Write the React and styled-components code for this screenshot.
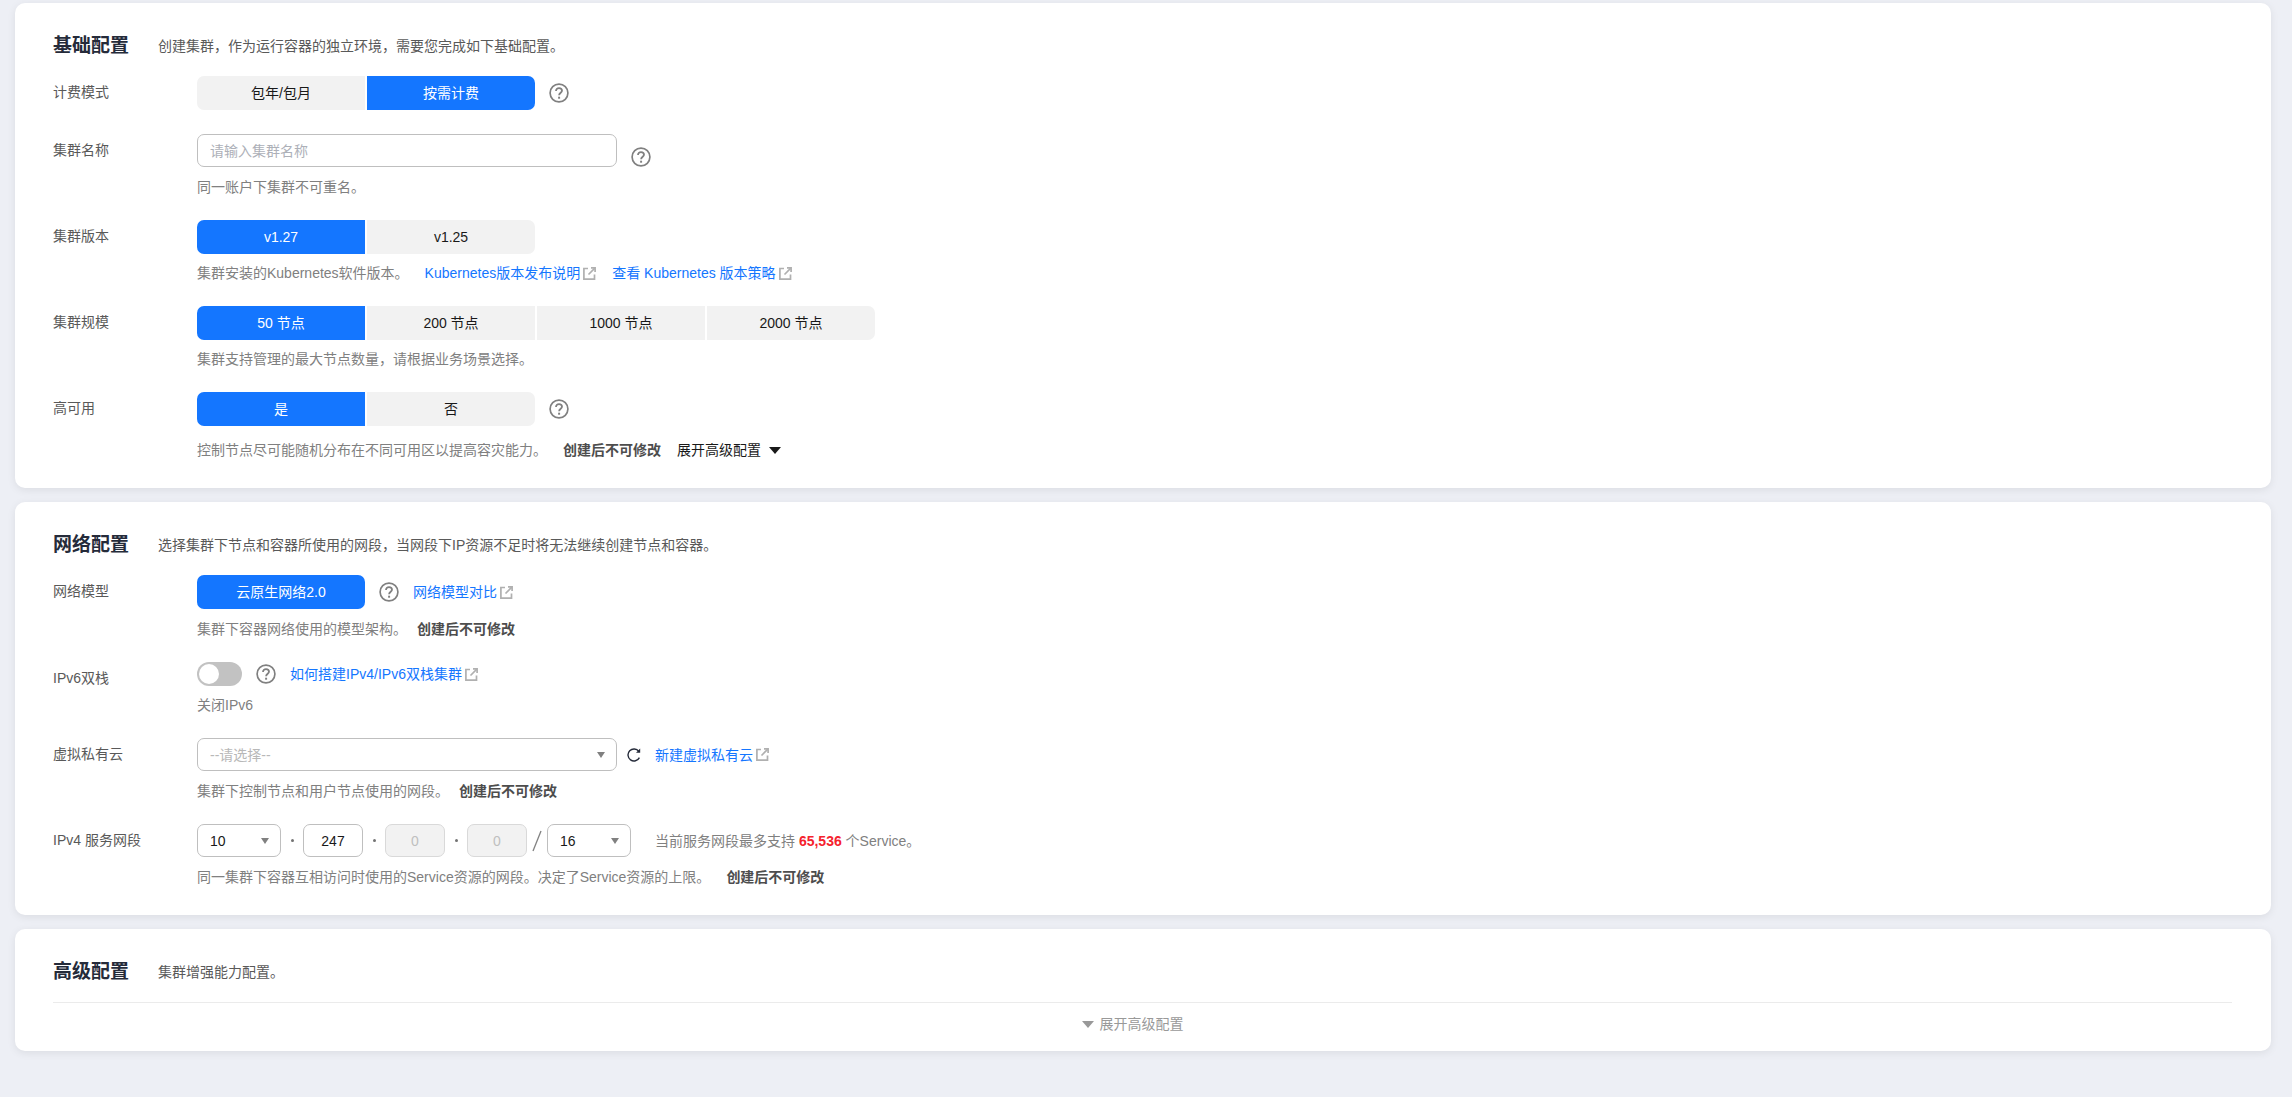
import React, { useState } from 'react'
import styled, { createGlobalStyle } from 'styled-components'

function ButtonGroup({ options, value, onChange, labelledBy }) {
    return (
        <Segments role="group" aria-labelledby={labelledBy}>
            {options.map((option) => (
                <Segment
                    key={option}
                    type="button"
                    $active={option === value}
                    aria-pressed={option === value}
                    onClick={() => onChange(option)}
                >
                    {option}
                </Segment>
            ))}
        </Segments>
    )
}

function HelpIcon() {
    return (
        <IconButton type="button" aria-label="帮助">
            <svg width="20" height="20" viewBox="0 0 20 20" fill="none" stroke="#808080">
                <circle cx="10" cy="10" r="8.9" strokeWidth="1.7" />
                <path d="M7 8C7 6.1 8.300 5.100 10 5.100s3 1 3 2.600c0 2-2.900 2.100-2.900 4.600" strokeWidth="1.8" />
                <path d="M9.100 13.700h2v2h-2z" fill="#808080" stroke="none" />
            </svg>
        </IconButton>
    )
}

function ExternalLink({ children }) {
    return (
        <Link href="#">
            {children}
            <svg width="13" height="13" viewBox="0 0 13 13" fill="none" stroke="#b0b0b0" strokeWidth="1.7">
                <path d="M5 1.5H.9v10.600h10.600V7.500" />
                <path d="M5.500 7.500L11.800 1.200" />
                <path d="M8 .9h4.100V5" />
            </svg>
        </Link>
    )
}

function Triangle({ size = 8, height = 6 }) {
    return (
        <svg width={size} height={height} viewBox="0 0 8 6" preserveAspectRatio="none">
            <path d="M0 0h8L4 6z" fill="currentColor" />
        </svg>
    )
}

function Dropdown({ id, label, placeholder, options, wide }) {
    const [value, setValue] = useState(placeholder ? '' : options[0])

    return (
        <SelectBox $wide={wide}>
            <SelectInput
                id={id}
                aria-label={label}
                $empty={value === ''}
                value={value}
                onChange={(e) => setValue(e.target.value)}
            >
                {placeholder && <option value="">{placeholder}</option>}
                {options.map((option) => <option key={option}>{option}</option>)}
            </SelectInput>
            <SelectArrow><Triangle /></SelectArrow>
        </SelectBox>
    )
}

function BasicConfig() {
    const [billing, setBilling] = useState('按需计费')
    const [version, setVersion] = useState('v1.27')
    const [scale, setScale] = useState('50 节点')
    const [ha, setHa] = useState('是')

    return (
        <Card>
            <CardHeader>
                <h2>基础配置</h2>
                <p>创建集群，作为运行容器的独立环境，需要您完成如下基础配置。</p>
            </CardHeader>

            <FormRow $space={24}>
                <Label as="span" id="billing">计费模式</Label>
                <Controls>
                    <ButtonGroup labelledBy="billing" options={['包年/包月', '按需计费']} value={billing} onChange={setBilling} />
                    <HelpIcon />
                </Controls>
            </FormRow>

            <FormRow>
                <Label htmlFor="name">集群名称</Label>
                <div>
                    <Controls $align="flex-end">
                        <TextInput id="name" type="text" placeholder="请输入集群名称" />
                        <HelpIcon />
                    </Controls>
                    <Hint $space={8}>同一账户下集群不可重名。</Hint>
                </div>
            </FormRow>

            <FormRow>
                <Label as="span" id="version">集群版本</Label>
                <div>
                    <ButtonGroup labelledBy="version" options={['v1.27', 'v1.25']} value={version} onChange={setVersion} />
                    <Hint $gap={16}>
                        集群安装的Kubernetes软件版本。
                        <ExternalLink>Kubernetes版本发布说明</ExternalLink>
                        <ExternalLink>查看 Kubernetes 版本策略</ExternalLink>
                    </Hint>
                </div>
            </FormRow>

            <FormRow>
                <Label as="span" id="scale">集群规模</Label>
                <div>
                    <ButtonGroup
                        labelledBy="scale"
                        options={['50 节点', '200 节点', '1000 节点', '2000 节点']}
                        value={scale}
                        onChange={setScale}
                    />
                    <Hint>集群支持管理的最大节点数量，请根据业务场景选择。</Hint>
                </div>
            </FormRow>

            <FormRow $space={26}>
                <Label as="span" id="ha">高可用</Label>
                <div>
                    <Controls>
                        <ButtonGroup labelledBy="ha" options={['是', '否']} value={ha} onChange={setHa} />
                        <HelpIcon />
                    </Controls>
                    <Hint $space={12} $gap={16}>
                        控制节点尽可能随机分布在不同可用区以提高容灾能力。
                        <strong>创建后不可修改</strong>
                        <ExpandButton type="button">
                            展开高级配置
                            <Triangle size={12} height={7} />
                        </ExpandButton>
                    </Hint>
                </div>
            </FormRow>
        </Card>
    )
}

function NetworkConfig() {
    const [model, setModel] = useState('云原生网络2.0')
    const [ipv6, setIpv6] = useState(false)

    return (
        <Card>
            <CardHeader>
                <h2>网络配置</h2>
                <p>选择集群下节点和容器所使用的网段，当网段下IP资源不足时将无法继续创建节点和容器。</p>
            </CardHeader>

            <FormRow>
                <Label as="span" id="model">网络模型</Label>
                <div>
                    <Controls>
                        <ButtonGroup labelledBy="model" options={['云原生网络2.0']} value={model} onChange={setModel} />
                        <HelpIcon />
                        <ExternalLink>网络模型对比</ExternalLink>
                    </Controls>
                    <Hint $space={8} $gap={10}>
                        集群下容器网络使用的模型架构。
                        <strong>创建后不可修改</strong>
                    </Hint>
                </div>
            </FormRow>

            <FormRow>
                <Label htmlFor="ipv6">IPv6双栈</Label>
                <div>
                    <Controls>
                        <Toggle id="ipv6" type="checkbox" checked={ipv6} onChange={(e) => setIpv6(e.target.checked)} />
                        <HelpIcon />
                        <ExternalLink>如何搭建IPv4/IPv6双栈集群</ExternalLink>
                    </Controls>
                    <Hint>{ipv6 ? '开启IPv6' : '关闭IPv6'}</Hint>
                </div>
            </FormRow>

            <FormRow>
                <Label htmlFor="vpc">虚拟私有云</Label>
                <div>
                    <Controls $gap={10}>
                        <Dropdown id="vpc" wide placeholder="--请选择--" options={['vpc-default']} />
                        <RefreshButton type="button" aria-label="刷新">
                            <svg width="14" height="14" viewBox="0 0 14 14" fill="none" stroke="#252b3a" strokeWidth="1.4">
                                <path d="M12.400 9.600A6 6 0 1 1 11.800 3.300" />
                                <path d="M13.200 .6v4.200H9z" fill="#252b3a" stroke="none" />
                            </svg>
                        </RefreshButton>
                        <ExternalLink>新建虚拟私有云</ExternalLink>
                    </Controls>
                    <Hint $space={8} $gap={10}>
                        集群下控制节点和用户节点使用的网段。
                        <strong>创建后不可修改</strong>
                    </Hint>
                </div>
            </FormRow>

            <FormRow $space={26}>
                <Label htmlFor="cidr">IPv4 服务网段</Label>
                <div>
                    <Controls $gap={24}>
                        <Cidr>
                            <Dropdown id="cidr" options={['10', '172', '192']} />
                            <Dot />
                            <Octet aria-label="第二段" defaultValue="247" />
                            <Dot />
                            <Octet aria-label="第三段" defaultValue="0" disabled />
                            <Dot />
                            <Octet aria-label="第四段" defaultValue="0" disabled />
                            <Slash width="20" height="24" viewBox="0 0 20 24" stroke="#808080">
                                <path d="M6 22L14 2" />
                            </Slash>
                            <Dropdown label="掩码" options={['16', '17', '18', '19']} />
                        </Cidr>
                        <Capacity>当前服务网段最多支持 <b>65,536</b> 个Service。</Capacity>
                    </Controls>
                    <Hint $space={8} $gap={16}>
                        同一集群下容器互相访问时使用的Service资源的网段。决定了Service资源的上限。
                        <strong>创建后不可修改</strong>
                    </Hint>
                </div>
            </FormRow>
        </Card>
    )
}

function AdvancedConfig() {
    return (
        <Card>
            <CardHeader>
                <h2>高级配置</h2>
                <p>集群增强能力配置。</p>
            </CardHeader>
            <CardFooter>
                <FooterButton type="button">
                    <Triangle size={12} height={7} />
                    展开高级配置
                </FooterButton>
            </CardFooter>
        </Card>
    )
}

function App() {
    return (
        <>
            <GlobalStyle />
            <Page>
                <BasicConfig />
                <NetworkConfig />
                <AdvancedConfig />
            </Page>
        </>
    )
}

export default App

const GlobalStyle = createGlobalStyle`
    *{
        box-sizing:border-box;
    }
    body{
        margin:0;
        background-color:#edeff5;
        color:#191919;
        font-family:"Liberation Sans", "Noto Sans CJK SC", sans-serif;
        font-size:14px;
        line-height:24px;
    }
    button,input,select{
        font:inherit;
        color:inherit;
    }
    button{
        padding:0;
        border:none;
        background:none;
        cursor:pointer;
    }
    svg{
        display:block;
        flex-shrink:0;
    }
`;

const Page = styled.main`
    display:flex;
    flex-direction:column;
    gap:14px;
    min-height:100vh;
    padding:3px 21px 45px 15px;
`;

const Card = styled.section`
    padding:28px 39px 0 38px;
    border-radius:10px;
    background-color:white;
    box-shadow:0 2px 8px rgba(0,0,0,0.08);
`;

const CardHeader = styled.header`
    display:flex;
    align-items:center;
    gap:29px;
    margin-bottom:15px;

    >h2{
        margin:0;
        color:#252b3a;
        font-size:19px;
        line-height:30px;
    }
    >p{
        margin:0;
        color:#595959;
        line-height:30px;
    }
`;

const CardFooter = styled.footer`
    display:flex;
    justify-content:center;
    padding:9px 0 15px;
    border-top:1px solid #ebebeb;
`;

const FormRow = styled.div`
    display:grid;
    grid-template-columns:144px 1fr;
    padding-bottom:${({ $space = 21 }) => $space}px;
`;

const Label = styled.label`
    color:#595959;
    line-height:32px;
`;

const Controls = styled.div`
    display:flex;
    align-items:${({ $align = 'center' }) => $align};
    gap:${({ $gap = 14 }) => $gap}px;
`;

const Segments = styled.div`
    display:flex;
    gap:2px;
`;

const Segment = styled.button`
    width:168px;
    height:34px;
    background-color:${({ $active }) => ($active ? '#1476ff' : '#f2f2f2')};
    color:${({ $active }) => ($active ? 'white' : '#191919')};

    &:first-child{
        border-top-left-radius:7px;
        border-bottom-left-radius:7px;
    }
    &:last-child{
        border-top-right-radius:7px;
        border-bottom-right-radius:7px;
    }
`;

const IconButton = styled.button`
    flex-shrink:0;
`;

const RefreshButton = styled(IconButton)`
    margin-right:4px;
`;

const Hint = styled.div`
    display:flex;
    align-items:center;
    gap:${({ $gap = 0 }) => $gap}px;
    margin-top:${({ $space = 7 }) => $space}px;
    color:#808080;

    >strong{
        color:#4d4d4d;
    }
`;

const Link = styled.a`
    display:inline-flex;
    align-items:center;
    gap:3px;
    color:#1476ff;
    text-decoration:none;

    &:hover{
        text-decoration:underline;
    }
`;

const TextInput = styled.input`
    width:420px;
    height:33px;
    padding:0 12px;
    border:1px solid #bfbfbf;
    border-radius:7px;
    outline:none;
    background-color:white;

    &::placeholder{
        color:#adb0b8;
    }
    &:focus{
        border-color:#1476ff;
    }
`;

const Octet = styled(TextInput)`
    width:60px;
    padding:0;
    text-align:center;

    &:disabled{
        border-color:#d9d9d9;
        background-color:#f2f2f2;
        color:#bfbfbf;
    }
`;

const SelectBox = styled.div`
    position:relative;
    width:${({ $wide }) => ($wide ? 420 : 84)}px;
`;

const SelectInput = styled.select`
    display:block;
    width:100%;
    height:33px;
    padding:0 12px;
    border:1px solid #bfbfbf;
    border-radius:7px;
    outline:none;
    appearance:none;
    background-color:white;
    color:${({ $empty }) => ($empty ? '#b8b8b8' : '#191919')};
`;

const SelectArrow = styled.span`
    position:absolute;
    top:14px;
    right:12px;
    color:#808080;
    pointer-events:none;
`;

const Toggle = styled.input`
    display:flex;
    align-items:center;
    width:45px;
    height:24px;
    margin:0;
    padding:0 2px;
    border-radius:12px;
    appearance:none;
    background-color:#c2c2c2;
    cursor:pointer;

    &::before{
        content:"";
        width:20px;
        height:20px;
        border-radius:50%;
        background-color:white;
    }
    &:checked{
        justify-content:flex-end;
        background-color:#1476ff;
    }
`;

const Cidr = styled.div`
    display:flex;
    align-items:center;
`;

const Dot = styled.span`
    width:3px;
    height:3px;
    margin:0 9px 0 10px;
    border-radius:50%;
    background-color:#737373;
`;

const Slash = styled.svg`
    fill:none;
    stroke-width:1.3;
`;

const Capacity = styled.span`
    color:#808080;

    >b{
        color:#f5222d;
    }
`;

const ExpandButton = styled.button`
    display:flex;
    align-items:center;
    gap:8px;
    color:#191919;
`;

const FooterButton = styled(ExpandButton)`
    gap:6px;
    padding-right:20px;
    color:#999;
`;
